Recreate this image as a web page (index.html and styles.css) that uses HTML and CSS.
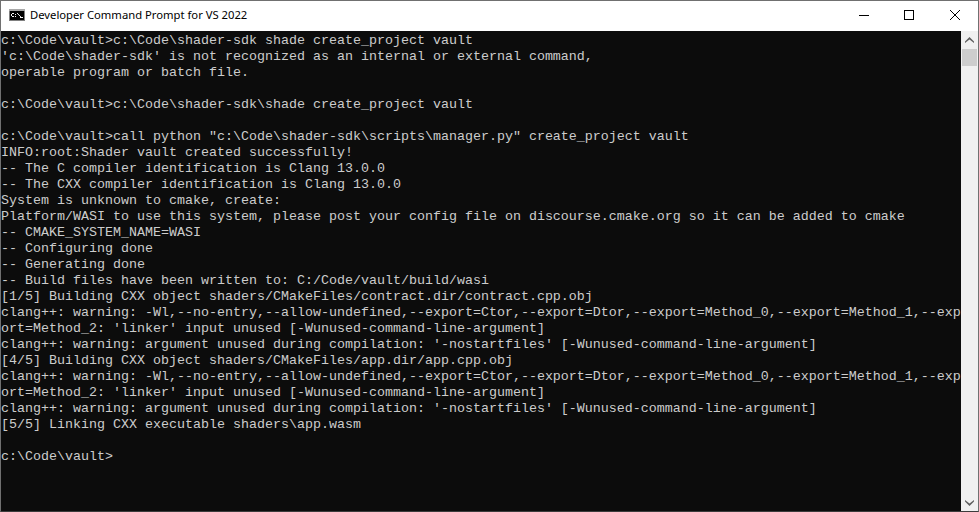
FILE: index.html
```html
<!DOCTYPE html>
<html lang="en">
<head>
<meta charset="utf-8">
<title>Developer Command Prompt for VS 2022</title>
<link rel="stylesheet" href="styles.css">
</head>
<body>
<div class="window">
  <header class="titlebar">
    <svg class="appicon" width="16" height="12" viewBox="0 0 16 12">
      <rect width="16" height="12" fill="#808080"/>
      <rect width="16" height="2" fill="#a8a8a8"/>
      <rect x="1" y="2" width="14" height="9" fill="#000"/>
      <path d="M3 4h2v1H3zM2 5h1v2H2zM3 7h2v1H3z" fill="#f4f4f4"/>
      <path d="M6 5h1v1H6zM6 7h1v1H6z" fill="#f4f4f4"/>
      <path d="M8 4h1v1H8zM9 5h1v1H9zM10 6h1v1h-1zM11 7h1v1h-1z" fill="#e0e0e0"/>
      <path d="M11 8h3v1h-3z" fill="#f4f4f4"/>
    </svg>
    <span class="title">Developer Command Prompt for VS 2022</span>
    <div class="controls">
      <div class="ctl ctl-min"><svg width="10" height="10" viewBox="0 0 10 10"><path d="M0 5.500h10" stroke="#000" fill="none"/></svg></div>
      <div class="ctl"><svg width="10" height="10" viewBox="0 0 10 10"><rect x=".5" y=".5" width="9" height="9" stroke="#000" fill="none"/></svg></div>
      <div class="ctl"><svg width="10" height="10" viewBox="0 0 10 10"><path d="M0 0l10 10M10 0L0 10" stroke="#000" fill="none"/></svg></div>
    </div>
  </header>
  <div class="body">
<pre class="console">c:\Code\vault&gt;c:\Code\shader-sdk shade create_project vault
'c:\Code\shader-sdk' is not recognized as an internal or external command,
operable program or batch file.

c:\Code\vault&gt;c:\Code\shader-sdk\shade create_project vault

c:\Code\vault&gt;call python "c:\Code\shader-sdk\scripts\manager.py" create_project vault
INFO:root:Shader vault created successfully!
-- The C compiler identification is Clang 13.0.0
-- The CXX compiler identification is Clang 13.0.0
System is unknown to cmake, create:
Platform/WASI to use this system, please post your config file on discourse.cmake.org so it can be added to cmake
-- CMAKE_SYSTEM_NAME=WASI
-- Configuring done
-- Generating done
-- Build files have been written to: C:/Code/vault/build/wasi
[1/5] Building CXX object shaders/CMakeFiles/contract.dir/contract.cpp.obj
clang++: warning: -Wl,--no-entry,--allow-undefined,--export=Ctor,--export=Dtor,--export=Method_0,--export=Method_1,--exp
ort=Method_2: 'linker' input unused [-Wunused-command-line-argument]
clang++: warning: argument unused during compilation: '-nostartfiles' [-Wunused-command-line-argument]
[4/5] Building CXX object shaders/CMakeFiles/app.dir/app.cpp.obj
clang++: warning: -Wl,--no-entry,--allow-undefined,--export=Ctor,--export=Dtor,--export=Method_0,--export=Method_1,--exp
ort=Method_2: 'linker' input unused [-Wunused-command-line-argument]
clang++: warning: argument unused during compilation: '-nostartfiles' [-Wunused-command-line-argument]
[5/5] Linking CXX executable shaders\app.wasm

c:\Code\vault&gt;</pre>
    <div class="scrollbar">
      <div class="arrow arrow-up"><svg width="9" height="6" viewBox="0 0 9 6"><path d="M4.500 0L9 4.500V6L4.500 2.500 0 6V4.500z" fill="#606060"/></svg></div>
      <div class="thumb"></div>
      <div class="track"></div>
      <div class="arrow arrow-down"><svg width="9" height="6" viewBox="0 0 9 6"><path d="M4.500 6L9 1.500V0L4.500 3.500 0 0v1.500z" fill="#606060"/></svg></div>
    </div>
  </div>
</div>
</body>
</html>
```

FILE: styles.css
```css
html, body {
  margin: 0;
  padding: 0;
  height: 100%;
  overflow: hidden;
  background: #0c0c0c;
}
.window {
  box-sizing: border-box;
  width: 979px;
  height: 512px;
  display: flex;
  flex-direction: column;
  border: 1px solid #707070;
  border-bottom-color: #3c3c3c;
  background: #fff;
}
.titlebar {
  box-sizing: border-box;
  height: 30px;
  flex: none;
  display: flex;
  align-items: center;
  padding-bottom: 2px;
  background: #fff;
}
.appicon {
  margin-left: 8px;
  flex: none;
}
.title {
  margin-left: 5px;
  font: 11.250px/16px "Noto Sans", "Open Sans", sans-serif;
  color: #000;
  white-space: nowrap;
}
.controls {
  margin-left: auto;
  display: flex;
  height: 28px;
}
.ctl {
  width: 46px;
  height: 28px;
  display: flex;
  align-items: center;
  justify-content: center;
}
.ctl-min {
  box-sizing: border-box;
  padding-left: 2px;
}
.body {
  flex: 1;
  min-height: 0;
  display: flex;
  background: #0c0c0c;
}
.console {
  flex: 1;
  min-width: 0;
  margin: 0;
  padding-top: 2px;
  overflow: hidden;
  font: 13.330px/16px "Liberation Mono", monospace;
  color: #cccccc;
  background: #0c0c0c;
}
.scrollbar {
  flex: none;
  width: 17px;
  display: flex;
  flex-direction: column;
  background: #f0f0f0;
}
.arrow {
  flex: none;
  height: 18px;
  display: flex;
  align-items: center;
  justify-content: center;
}
.arrow-down {
  box-sizing: border-box;
  padding-top: 2px;
}
.thumb {
  height: 17px;
  flex: none;
  margin: 0 1px;
  background: #cdcdcd;
}
.track {
  flex: 1;
}
```
